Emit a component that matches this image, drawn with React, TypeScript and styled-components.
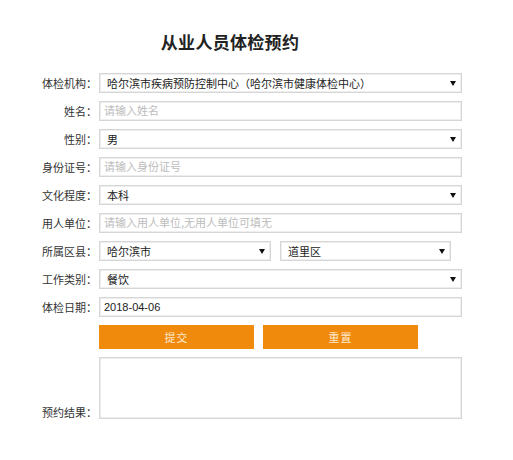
import styled, { createGlobalStyle } from "styled-components";

const GlobalStyle = createGlobalStyle`
  html, body {
    margin: 0;
    padding: 0;
    background: #ffffff;
  }
  body {
    font-family: "Noto Sans CJK SC", "Liberation Sans", sans-serif;
    color: #333;
  }
`;

interface SelectProps {
  value: string;
  $width?: number;
}

function Select({ value, $width }: SelectProps) {
  return (
    <SelectBox $width={$width}>
      <span>{value}</span>
      <svg width="6" height="5" viewBox="0 0 6 5">
        <path d="M0 0 L6 0 L3 5 Z" fill="#111" />
      </svg>
    </SelectBox>
  );
}

function App() {
  return (
    <>
      <GlobalStyle />
      <Page>
        <Title>从业人员体检预约</Title>
        <Form>
          <Row>
            <Label>体检机构：</Label>
            <Select value="哈尔滨市疾病预防控制中心（哈尔滨市健康体检中心）" />
          </Row>
          <Row>
            <Label>姓名：</Label>
            <TextInput placeholder="请输入姓名" />
          </Row>
          <Row>
            <Label>性别：</Label>
            <Select value="男" />
          </Row>
          <Row>
            <Label>身份证号：</Label>
            <TextInput placeholder="请输入身份证号" />
          </Row>
          <Row>
            <Label>文化程度：</Label>
            <Select value="本科" />
          </Row>
          <Row>
            <Label>用人单位：</Label>
            <TextInput placeholder="请输入用人单位,无用人单位可填无" />
          </Row>
          <Row>
            <Label>所属区县：</Label>
            <Pair>
              <Select value="哈尔滨市" $width={172} />
              <Select value="道里区" $width={171} />
            </Pair>
          </Row>
          <Row>
            <Label>工作类别：</Label>
            <Select value="餐饮" />
          </Row>
          <Row>
            <Label>体检日期：</Label>
            <TextInput defaultValue="2018-04-06" readOnly />
          </Row>
          <Row>
            <Label />
            <Pair>
              <OrangeButton type="button">提交</OrangeButton>
              <OrangeButton type="button">重置</OrangeButton>
            </Pair>
          </Row>
          <ResultRow>
            <Label>预约结果：</Label>
            <ResultArea />
          </ResultRow>
        </Form>
      </Page>
    </>
  );
}

const Page = styled.div`
  width: 513px;
  padding-top: 31px;
`;

const Title = styled.h1`
  width: 460px;
  margin: 0;
  text-align: center;
  font-size: 17px;
  font-weight: 700;
  line-height: 22px;
  color: #222;
  letter-spacing: 0.3px;
`;

const Form = styled.div`
  display: flex;
  flex-direction: column;
  gap: 8px;
  margin: 20px 0 0 30px;
  width: 432px;
`;

const Row = styled.div`
  display: grid;
  grid-template-columns: 67px 363px;
  column-gap: 2px;
  align-items: center;
`;

const ResultRow = styled(Row)`
  align-items: end;
`;

const Label = styled.div`
  text-align: right;
  font-size: 11px;
  line-height: 14px;
  color: #333;
  white-space: nowrap;
`;

const fieldBorder = `
  box-sizing: border-box;
  border: 1px solid #d6d6d6;
  box-shadow: inset 0 0 0 1px #eeeeee;
  background: #fff;
`;

const SelectBox = styled.div<{ $width?: number }>`
  ${fieldBorder}
  width: ${(p) => (p.$width ? `${p.$width}px` : "100%")};
  height: 20px;
  display: flex;
  align-items: center;
  justify-content: space-between;
  padding: 0 5px 0 7px;
  font-size: 11px;
  color: #222;
  white-space: nowrap;

  svg {
    flex-shrink: 0;
  }
`;

const TextInput = styled.input`
  ${fieldBorder}
  width: 100%;
  height: 20px;
  padding: 0 4px;
  margin: 0;
  font-family: "Liberation Sans", "Noto Sans CJK SC", sans-serif;
  font-size: 11px;
  color: #222;
  outline: none;

  &::placeholder {
    font-family: "Noto Sans CJK SC", sans-serif;
    color: #bcbcbc;
  }
`;

const Pair = styled.div`
  display: flex;
  gap: 9px;
`;

const OrangeButton = styled.button`
  width: 155px;
  height: 24px;
  margin: 0;
  border: none;
  background: #ef8a0c;
  color: #fde9cf;
  font-family: "Noto Sans CJK SC", sans-serif;
  font-size: 11px;
  letter-spacing: 1px;
  cursor: pointer;
`;

const ResultArea = styled.textarea`
  ${fieldBorder}
  width: 100%;
  height: 62px;
  margin: 0;
  padding: 4px;
  resize: none;
  outline: none;
`;

export default App;
